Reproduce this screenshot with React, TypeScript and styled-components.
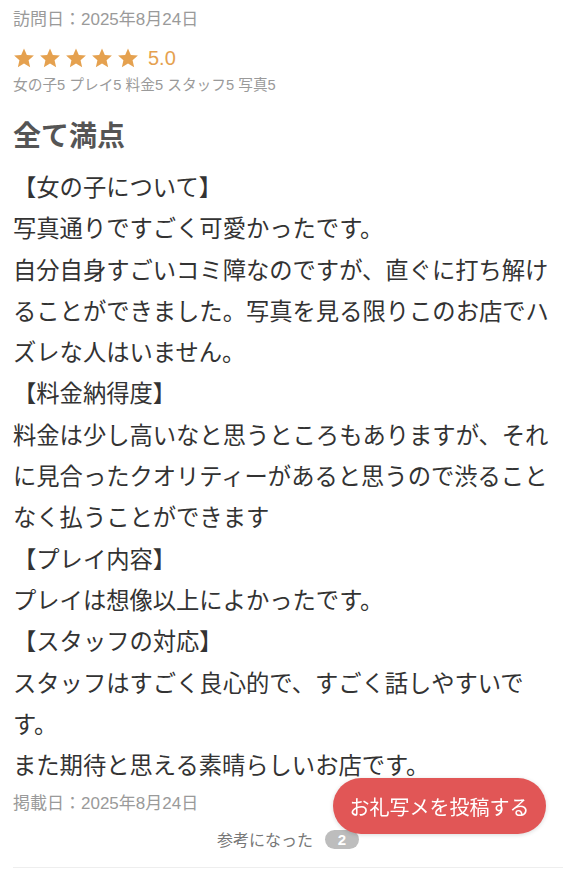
import React from "react";
import styled, { createGlobalStyle } from "styled-components";

const GlobalStyle = createGlobalStyle`
  html, body {
    margin: 0;
    padding: 0;
    background: #fff;
  }
  body {
    font-family: "Noto Sans CJK JP", "Noto Sans", sans-serif;
    -webkit-font-smoothing: antialiased;
  }
`;

const Page = styled.div`
  width: 576px;
  box-sizing: border-box;
  padding: 8px 13px 0;
`;

const Meta = styled.div<{ $top?: number }>`
  margin-top: ${(p) => p.$top ?? 0}px;
  font-family: "Liberation Sans", "Noto Sans CJK JP", sans-serif;
  font-size: 17px;
  line-height: 24px;
  color: #9a9a9a;
`;

const RatingRow = styled.div`
  margin-top: 13px;
  height: 26px;
  display: flex;
  align-items: center;
  gap: 4px;
`;

const Score = styled.span`
  margin-left: 5px;
  font-family: "Liberation Sans", Arial, sans-serif;
  font-size: 20px;
  color: #e5a14f;
`;

const SubScores = styled.div`
  margin-top: 4px;
  font-family: "Liberation Sans", "Noto Sans CJK JP", sans-serif;
  font-size: 14.7px;
  line-height: 20px;
  color: #9a9a9a;
`;

const Title = styled.h2`
  margin: 19px 0 0;
  font-size: 28px;
  line-height: 40px;
  font-weight: 700;
  color: #555;
`;

const Body = styled.div`
  margin-top: 12px;
  font-size: 23.3px;
  line-height: 41.3px;
  color: #333;
  line-break: strict;
`;

const Line = styled.div``;

const Helpful = styled.div`
  margin-top: 12px;
  display: flex;
  justify-content: center;
  align-items: center;
  gap: 12px;
  height: 22px;
  font-size: 16px;
  color: #777;
`;

const Badge = styled.span`
  display: inline-flex;
  align-items: center;
  justify-content: center;
  min-width: 34px;
  height: 19px;
  border-radius: 10px;
  background: #bdbdbd;
  color: #fff;
  font-family: "Liberation Sans", Arial, sans-serif;
  font-weight: 700;
  font-size: 15px;
`;

const Divider = styled.hr`
  margin: 17px 0 0;
  border: none;
  border-top: 1px solid #eeeeee;
`;

const FloatButton = styled.button`
  position: fixed;
  right: 30px;
  bottom: 38px;
  width: 213px;
  height: 56px;
  border: none;
  border-radius: 28px;
  background: #e15656;
  color: #fff;
  font-family: "Noto Sans CJK JP", sans-serif;
  font-size: 20px;
  box-shadow: 0 1px 4px rgba(0, 0, 0, 0.15);
  cursor: pointer;
`;

const Star = () => (
  <svg width="22" height="22" viewBox="0 0 24 24">
    <path
      d="M12 1.5l3.1 7.1 7.7.7-5.8 5.1 1.7 7.6L12 18l-6.7 4 1.7-7.6L1.2 9.3l7.7-.7z"
      fill="#e5a14f"
    />
  </svg>
);

const lines = [
  "【女の子について】",
  "写真通りですごく可愛かったです。",
  "自分自身すごいコミ障なのですが、直ぐに打ち解けることができました。写真を見る限りこのお店でハズレな人はいません。",
  "【料金納得度】",
  "料金は少し高いなと思うところもありますが、それに見合ったクオリティーがあると思うので渋ることなく払うことができます",
  "【プレイ内容】",
  "プレイは想像以上によかったです。",
  "【スタッフの対応】",
  "スタッフはすごく良心的で、すごく話しやすいです。",
  "また期待と思える素晴らしいお店です。",
];

export default function App() {
  return (
    <>
      <GlobalStyle />
      <Page>
        <Meta>訪問日：2025年8月24日</Meta>
        <RatingRow>
          {[0, 1, 2, 3, 4].map((i) => (
            <Star key={i} />
          ))}
          <Score>5.0</Score>
        </RatingRow>
        <SubScores>女の子5 プレイ5 料金5 スタッフ5 写真5</SubScores>
        <Title>全て満点</Title>
        <Body>
          {lines.map((l, i) => (
            <Line key={i}>{l}</Line>
          ))}
        </Body>
        <Meta $top={7}>掲載日：2025年8月24日</Meta>
        <Helpful>
          参考になった
          <Badge>2</Badge>
        </Helpful>
        <Divider />
      </Page>
      <FloatButton>お礼写メを投稿する</FloatButton>
    </>
  );
}
